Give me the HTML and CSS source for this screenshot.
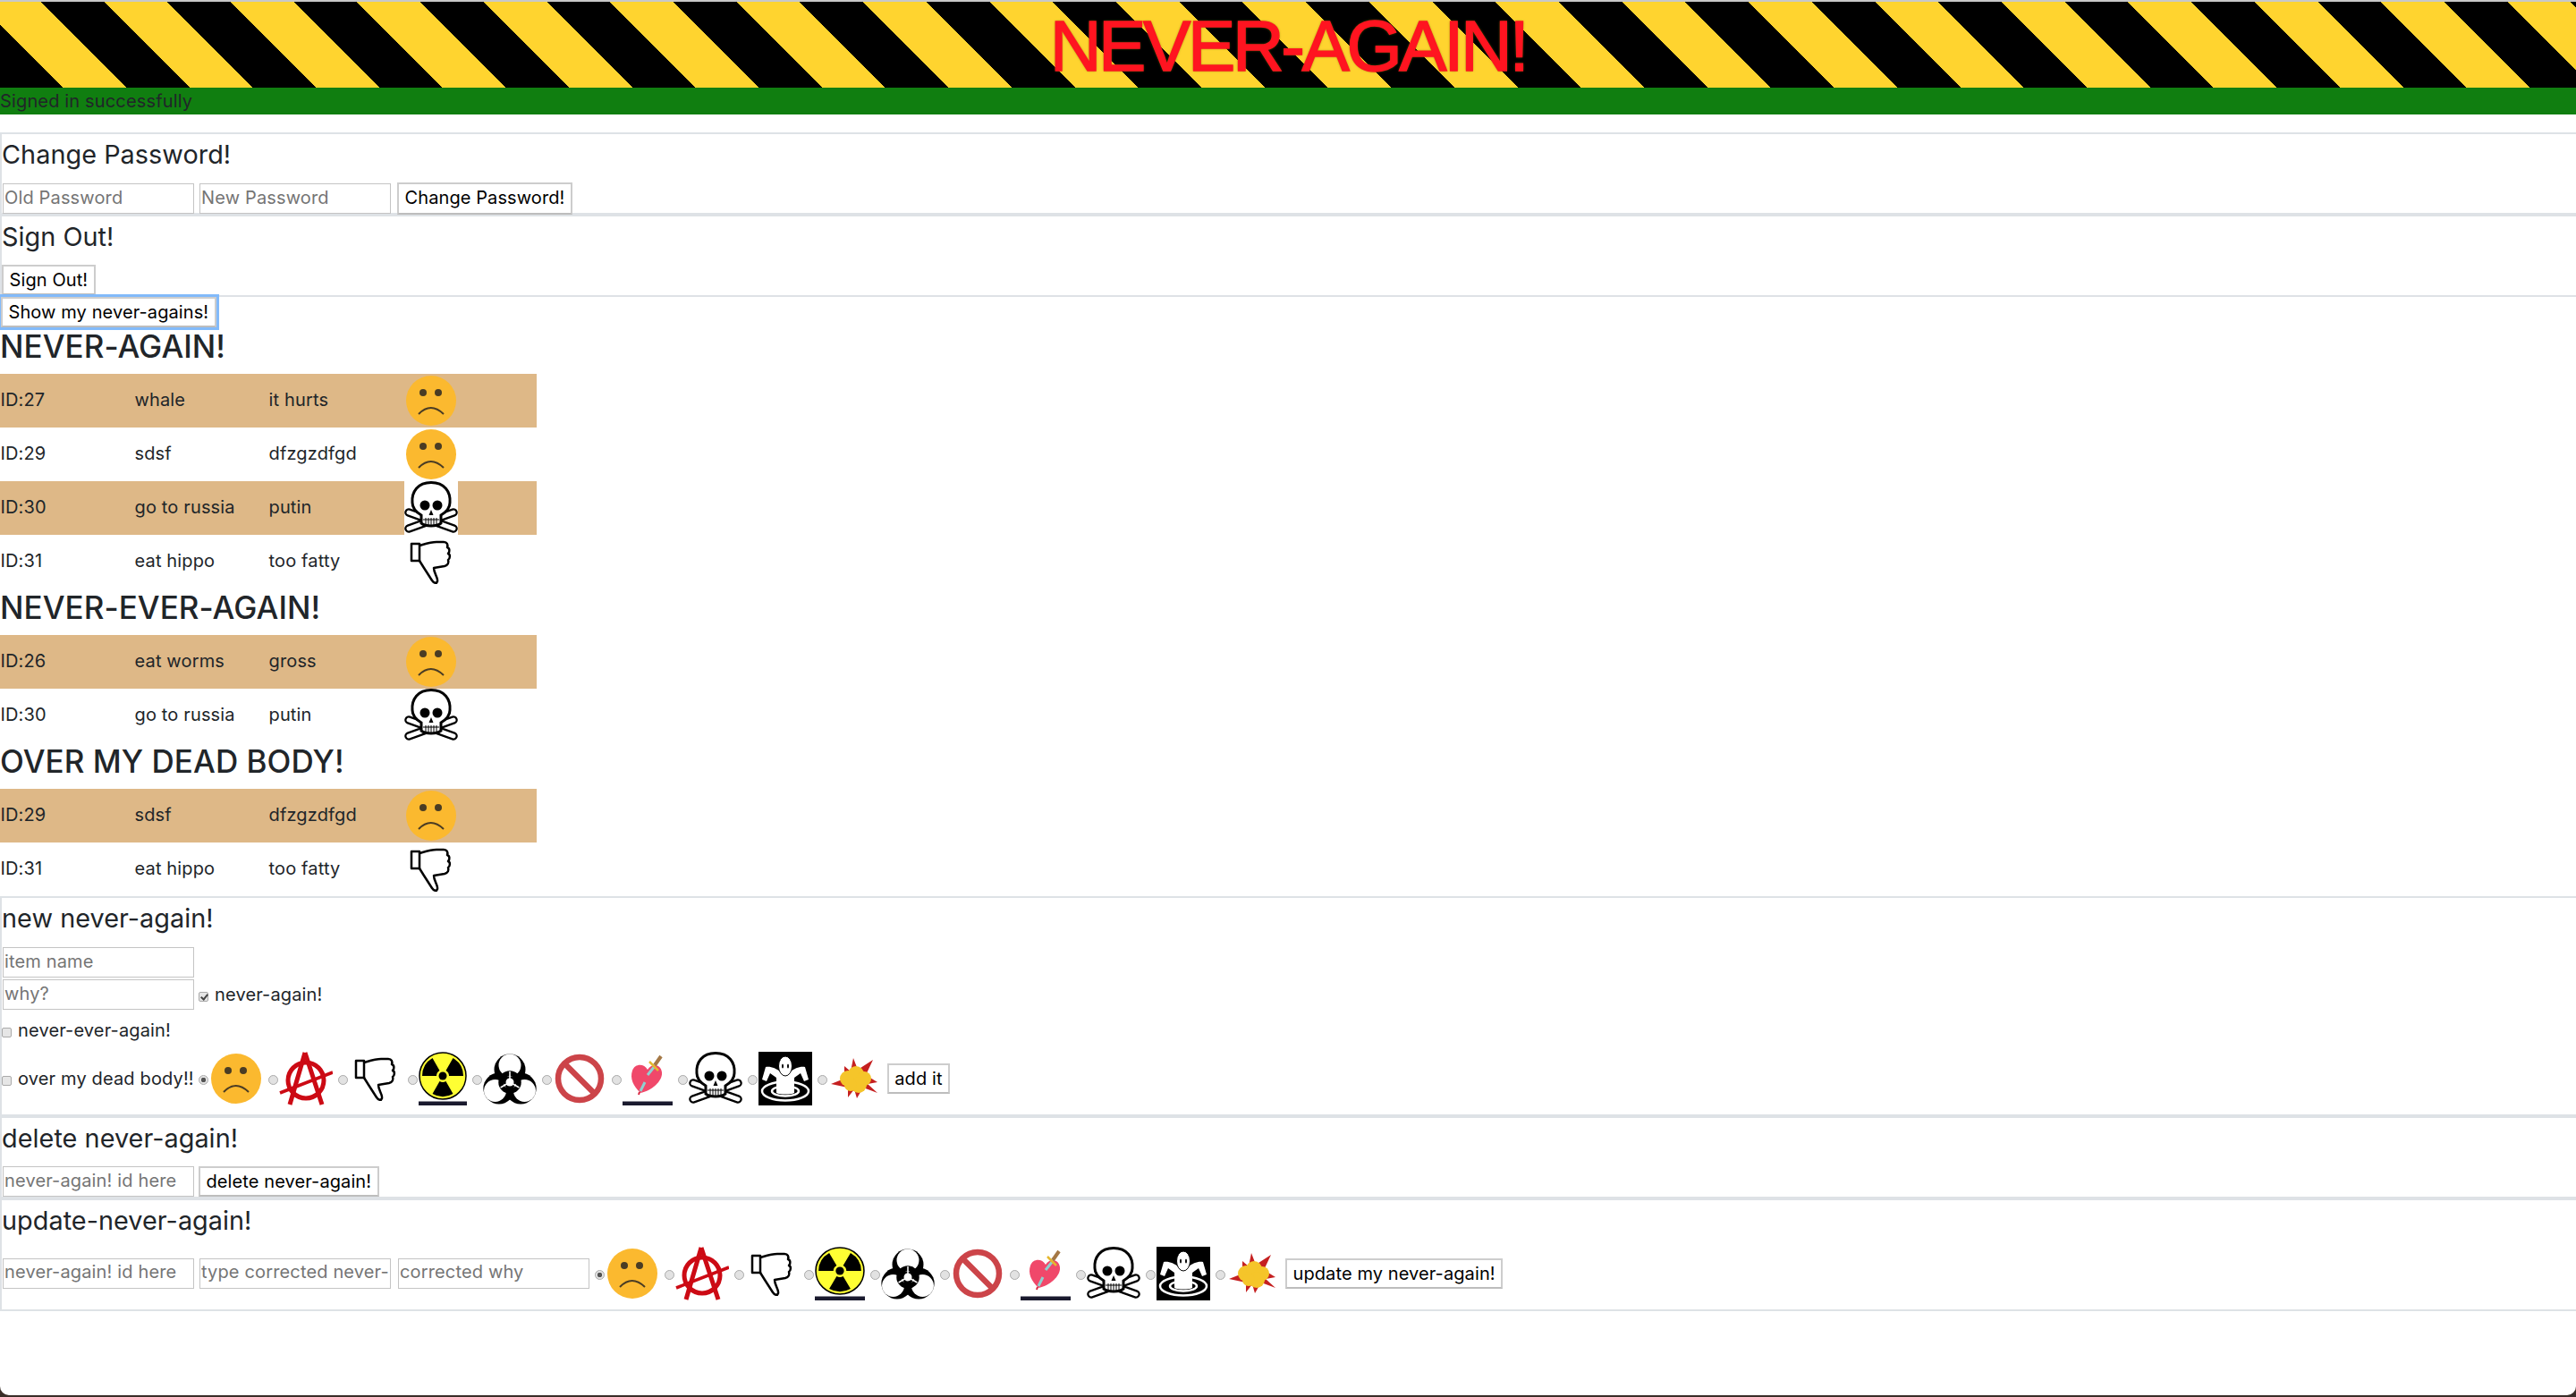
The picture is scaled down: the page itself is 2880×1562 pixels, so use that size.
FILE: index.html
```html
<!DOCTYPE html>
<html lang="en">
<head>
  <meta charset="UTF-8">
  <title>NEVER-AGAIN!</title>
  <link rel="stylesheet" href="styles.css">
</head>
<body>

  <svg class="sprite" xmlns="http://www.w3.org/2000/svg">
    <symbol id="i-sad" viewBox="0 0 60 60">
      <circle cx="30" cy="30" r="28" fill="#fbb92f"/>
      <circle cx="21" cy="21" r="4" fill="#4a3c24"/>
      <circle cx="38" cy="21" r="4" fill="#4a3c24"/>
      <path d="M16 45 Q29.500 31 44 45" fill="none" stroke="#4a3c24" stroke-width="2"/>
    </symbol>
    <symbol id="i-anarchy" viewBox="0 0 60 60">
      <g fill="none" stroke="#cc0a14" stroke-width="5">
        <circle cx="30" cy="32" r="20"/>
        <path d="M29 1 L12 59 M29 1 L48 59"/>
        <path d="M1 46 L60 23" stroke-width="3.500"/>
      </g>
    </symbol>
    <symbol id="i-thumb" viewBox="0 0 60 60">
      <rect width="60" height="60" fill="#fff"/>
      <g fill="none" stroke="#000" stroke-width="2.500" stroke-linejoin="round">
        <rect x="8" y="10" width="9" height="19"/>
        <path d="M17 12 C24 10 30 8 36 8 L44 8 C48 8 49 11 48 14 C51 15 51 19 49 21 C52 22 51 27 49 28 C50 31 49 34 45 35 L33 37 C33 43 38 48 37 52 C36 55 33 54 31 51 L22 37 L17 29"/>
      </g>
    </symbol>
    <symbol id="i-nuke" viewBox="0 0 54 60" preserveAspectRatio="none">
      <circle cx="27" cy="27" r="26" fill="#ffff33" stroke="#000" stroke-width="1.500"/>
      <path d="M34 27 L50 27 A23 23 0 0 0 38.500 7.100 L30.500 20.900 A7 7 0 0 1 34 27Z"/>
      <path d="M20 27 L4 27 A23 23 0 0 1 15.500 7.100 L23.500 20.900 A7 7 0 0 0 20 27Z"/>
      <path d="M23.500 33.100 L15.500 46.900 A23 23 0 0 0 38.500 46.900 L30.500 33.100 A7 7 0 0 1 23.500 33.100Z"/>
      <circle cx="27" cy="27" r="4.500"/>
      <rect y="55.500" width="54" height="4.500" fill="#1a1a2e"/>
    </symbol>
    <symbol id="i-bio" viewBox="0 0 60 60">
      <g transform="translate(30 34)">
        <circle cx="0" cy="-14" r="17.500"/>
        <circle cx="12.120" cy="7" r="17.500"/>
        <circle cx="-12.120" cy="7" r="17.500"/>
        <circle cx="0" cy="-19" r="12.500" fill="#fff"/>
        <circle cx="16.450" cy="9.500" r="12.500" fill="#fff"/>
        <circle cx="-16.450" cy="9.500" r="12.500" fill="#fff"/>
        <circle r="10" fill="none" stroke="#000" stroke-width="5.500"/>
        <path d="M0 -3 L0 -12 M2.600 1.500 L10.400 6 M-2.600 1.500 L-10.400 6" stroke="#fff" stroke-width="1.500"/>
        <circle r="4.500" fill="#fff"/>
      </g>
    </symbol>
    <symbol id="i-no" viewBox="0 0 60 60">
      <circle cx="30" cy="30" r="24" fill="none" stroke="#cc4449" stroke-width="6.500"/>
      <path d="M13 13 L47 47" stroke="#cc4449" stroke-width="6.500"/>
    </symbol>
    <symbol id="i-heart" viewBox="0 0 56 60" preserveAspectRatio="none">
      <path d="M20 46 C12 38 8 30 11 21 C14 13 24 13 28 20 C33 12 43 14 44 23 C45 33 32 44 20 46Z" fill="#f0486a"/>
      <path d="M36 16 L28 26" stroke="#8fd0d0" stroke-width="3"/>
      <path d="M25 34 L20 44" stroke="#8fd0d0" stroke-width="3"/>
      <path d="M19 45 L18 48" stroke="#d8203a" stroke-width="2"/>
      <path d="M30 11 L40 21" stroke="#e5b82e" stroke-width="2.500"/>
      <path d="M36 15 L43 5" stroke="#a47845" stroke-width="4"/>
      <rect y="55.500" width="56" height="4.500" fill="#1a1a2e"/>
    </symbol>
    <symbol id="i-skull" viewBox="0 0 60 60">
      <rect width="60" height="60" fill="#fff"/>
      <g stroke-linecap="round" fill="none">
        <path d="M5 35 L55 53 M55 35 L5 53" stroke="#000" stroke-width="9.500"/>
        <path d="M5 35 L55 53 M55 35 L5 53" stroke="#fff" stroke-width="5"/>
      </g>
      <path d="M30 1.500 C15 1.500 8 12 9 24 C9 31 14 35 19 38 L19 47 C24 51 36 51 41 47 L41 38 C46 35 51 31 51 24 C52 12 45 1.500 30 1.500Z" fill="#fff" stroke="#000" stroke-width="3"/>
      <circle cx="23" cy="27" r="5.500"/>
      <circle cx="37" cy="27" r="5.500"/>
      <path d="M30 32 L27.500 38 L32.500 38Z"/>
      <path d="M21 43 L39 43 M24 41 L24 48 M27 41 L27 49 M30 41 L30 49 M33 41 L33 49 M36 41 L36 48" stroke="#000" stroke-width="1"/>
    </symbol>
    <symbol id="i-hole" viewBox="0 0 60 60">
      <rect width="60" height="60"/>
      <g fill="none" stroke="#fff">
        <ellipse cx="30" cy="44" rx="26" ry="10.500" stroke-width="2.500"/>
        <ellipse cx="30" cy="44" rx="15" ry="5.500" stroke-width="2.500"/>
      </g>
      <path d="M4 31 L8 17 C14 16 20 19 24 22 L36 22 C40 19 46 16 52 17 L56 31 L51 33 L47 24 L40 29 L40 46 C36 48 24 48 20 46 L20 29 L13 24 L9 33Z" fill="#fff"/>
      <ellipse cx="30" cy="16" rx="7.500" ry="11" fill="#fff" stroke="#000"/>
      <ellipse cx="27" cy="16" rx="1" ry="2.500"/>
      <ellipse cx="33" cy="16" rx="1" ry="2.500"/>
    </symbol>
    <symbol id="i-boom" viewBox="0 0 60 60">
      <path d="M18 16 L25 22 L28 7 L33 20 L50 9 L42 26 L55 34 L44 36 L55 46 L39 40 L32 52 L29 42 L22 51 L22 40 L3 36 L18 30Z" fill="#c52020"/>
      <g fill="#f5c52a">
        <circle cx="22" cy="30" r="9"/>
        <circle cx="31" cy="25" r="9"/>
        <circle cx="40" cy="30" r="8"/>
        <circle cx="34" cy="37" r="9"/>
        <circle cx="25" cy="37" r="7"/>
      </g>
    </symbol>
  </svg>

  <header class="banner">
    <h1>NEVER-AGAIN!</h1>
  </header>
  <div class="flash">Signed in successfully</div>

  <section class="panel panel-first">
    <h4>Change Password!</h4>
    <div class="line line-flush">
      <input type="password" placeholder="Old Password">
      <input type="password" placeholder="New Password">
      <button class="btn btn-tall btn-change">Change Password!</button>
    </div>
  </section>

  <section class="panel">
    <h4>Sign Out!</h4>
    <button class="btn">Sign Out!</button>
  </section>

  <button class="btn btn-show">Show my never-agains!</button>

  <h3>NEVER-AGAIN!</h3>
  <div class="list">
    <div class="item"><span>ID:27</span><span>whale</span><span>it hurts</span><svg width="60" height="60"><use href="#i-sad"/></svg></div>
    <div class="item"><span>ID:29</span><span>sdsf</span><span>dfzgzdfgd</span><svg width="60" height="60"><use href="#i-sad"/></svg></div>
    <div class="item"><span>ID:30</span><span>go to russia</span><span>putin</span><svg width="60" height="60"><use href="#i-skull"/></svg></div>
    <div class="item"><span>ID:31</span><span>eat hippo</span><span>too fatty</span><svg width="60" height="60"><use href="#i-thumb"/></svg></div>
  </div>

  <h3>NEVER-EVER-AGAIN!</h3>
  <div class="list">
    <div class="item"><span>ID:26</span><span>eat worms</span><span>gross</span><svg width="60" height="60"><use href="#i-sad"/></svg></div>
    <div class="item"><span>ID:30</span><span>go to russia</span><span>putin</span><svg width="60" height="60"><use href="#i-skull"/></svg></div>
  </div>

  <h3>OVER MY DEAD BODY!</h3>
  <div class="list">
    <div class="item"><span>ID:29</span><span>sdsf</span><span>dfzgzdfgd</span><svg width="60" height="60"><use href="#i-sad"/></svg></div>
    <div class="item"><span>ID:31</span><span>eat hippo</span><span>too fatty</span><svg width="60" height="60"><use href="#i-thumb"/></svg></div>
  </div>

  <section class="panel panel-add">
    <h4>new never-again!</h4>
    <div class="line"><input type="text" placeholder="item name"></div>
    <div class="line">
      <input type="text" placeholder="why?">
      <label class="check"><input type="checkbox" checked>never-again!</label>
    </div>
    <div class="line line-check">
      <label class="check"><input type="checkbox">never-ever-again!</label>
    </div>
    <div class="line line-icons">
      <label class="check"><input type="checkbox">over my dead body!!</label>
      <label class="pick"><input type="radio" name="icon" checked><svg width="60" height="60"><use href="#i-sad"/></svg></label>
      <label class="pick"><input type="radio" name="icon"><svg width="60" height="60"><use href="#i-anarchy"/></svg></label>
      <label class="pick"><input type="radio" name="icon"><svg width="60" height="60"><use href="#i-thumb"/></svg></label>
      <label class="pick"><input type="radio" name="icon"><svg width="54" height="60"><use href="#i-nuke"/></svg></label>
      <label class="pick"><input type="radio" name="icon"><svg width="60" height="60"><use href="#i-bio"/></svg></label>
      <label class="pick"><input type="radio" name="icon"><svg width="60" height="60"><use href="#i-no"/></svg></label>
      <label class="pick"><input type="radio" name="icon"><svg width="56" height="60"><use href="#i-heart"/></svg></label>
      <label class="pick"><input type="radio" name="icon"><svg width="60" height="60"><use href="#i-skull"/></svg></label>
      <label class="pick"><input type="radio" name="icon"><svg width="60" height="60"><use href="#i-hole"/></svg></label>
      <label class="pick"><input type="radio" name="icon"><svg width="60" height="60"><use href="#i-boom"/></svg></label>
      <button class="btn">add it</button>
    </div>
  </section>

  <section class="panel">
    <h4>delete never-again!</h4>
    <div class="line line-short">
      <input type="text" placeholder="never-again! id here">
      <button class="btn btn-delete">delete never-again!</button>
    </div>
  </section>

  <section class="panel panel-update">
    <h4>update-never-again!</h4>
    <div class="line line-icons">
      <input type="text" placeholder="never-again! id here">
      <input type="text" placeholder="type corrected never-again!">
      <input class="input-why" type="text" placeholder="corrected why">
      <label class="pick"><input type="radio" name="icon2" checked><svg width="60" height="60"><use href="#i-sad"/></svg></label>
      <label class="pick"><input type="radio" name="icon2"><svg width="60" height="60"><use href="#i-anarchy"/></svg></label>
      <label class="pick"><input type="radio" name="icon2"><svg width="60" height="60"><use href="#i-thumb"/></svg></label>
      <label class="pick"><input type="radio" name="icon2"><svg width="56" height="60"><use href="#i-nuke"/></svg></label>
      <label class="pick"><input type="radio" name="icon2"><svg width="60" height="60"><use href="#i-bio"/></svg></label>
      <label class="pick"><input type="radio" name="icon2"><svg width="60" height="60"><use href="#i-no"/></svg></label>
      <label class="pick"><input type="radio" name="icon2"><svg width="56" height="60"><use href="#i-heart"/></svg></label>
      <label class="pick"><input type="radio" name="icon2"><svg width="60" height="60"><use href="#i-skull"/></svg></label>
      <label class="pick"><input type="radio" name="icon2"><svg width="60" height="60"><use href="#i-hole"/></svg></label>
      <label class="pick"><input type="radio" name="icon2"><svg width="60" height="60"><use href="#i-boom"/></svg></label>
      <button class="btn">update my never-again!</button>
    </div>
  </section>

</body>
</html>
```

FILE: styles.css
```css
html {
  background: #3a2e28;
}

body {
  margin: 0;
  height: 1560px;
  box-sizing: border-box;
  background: #fff;
  border-top: 2px solid #c8c8c8;
  border-radius: 0 0 10px 10px;
  color: #212529;
  font-family: Inter, "Noto Sans", sans-serif;
  font-size: 20px;
  line-height: 30px;
  letter-spacing: 0.150px;
  overflow: hidden;
}

.sprite {
  display: none;
}

.banner {
  height: 96px;
  display: flex;
  justify-content: center;
  background: repeating-linear-gradient(45deg, #000 0 50px, #ffd42f 50px 100px);
}

.banner h1 {
  margin: 3px 0 0;
  font-family: "Liberation Sans", Arial, sans-serif;
  font-size: 80px;
  font-weight: 400;
  line-height: 93px;
  letter-spacing: -3.400px;
  color: #ff1420;
  -webkit-text-stroke: 1.500px #ff1420;
  text-shadow: 0 0 3px #7a7a00;
}

.flash {
  height: 30px;
  background: #107e10;
  margin-bottom: 20px;
}

.panel {
  border: 2px solid #dee2e6;
  border-right: 0;
}

h4 {
  margin: 0 0 9px;
  font-size: 28.800px;
  font-weight: 400;
  line-height: 45px;
  letter-spacing: 0.050px;
}

h3 {
  margin: 0 0 10px;
  font-size: 35px;
  font-weight: 500;
  line-height: 42px;
  letter-spacing: 0.050px;
}

.line {
  display: flex;
  align-items: center;
  height: 36px;
}

.line-flush {
  margin-bottom: -2px;
}

.line-short {
  height: 34px;
}

.line-check {
  height: 44px;
  padding-bottom: 2px;
}

.line-icons {
  height: 60px;
  padding-bottom: 10px;
}

.panel-update .line-icons {
  margin-top: -3px;
  height: 61px;
}

input[type="text"],
input[type="password"] {
  box-sizing: border-box;
  flex: none;
  width: 214px;
  height: 34px;
  margin: 0 6px 0 1px;
  padding: 0 1px 3px;
  border: 1.500px solid #c4c4c4;
  background: #fff;
  font: inherit;
  letter-spacing: inherit;
  color: #212529;
}

input + input[type="text"],
input + input[type="password"] {
  margin-left: 0;
}

input::placeholder {
  color: #757575;
  opacity: 1;
}

.input-why {
  margin-left: 2px !important;
}

.btn {
  box-sizing: border-box;
  display: block;
  flex: none;
  height: 34px;
  padding: 0 6.500px 3px;
  border: 2px solid #cdcdcd;
  border-bottom-color: #bdbdbd;
  background: #fff;
  color: #000;
  font: inherit;
  letter-spacing: 0.100px;
}

.btn-tall {
  height: 36px;
}

.btn-change {
  margin-left: 1px;
}

.btn-delete {
  margin-left: -1px;
}

.btn-show {
  margin-left: 1px;
  box-shadow: 0 0 0 3px #82bafa;
  position: relative;
}

.item {
  display: grid;
  grid-template-columns: 150px 150px 150px 150px;
  width: 600px;
  height: 60px;
  align-items: center;
}

.item span {
  margin-top: -3px;
  padding-left: 0.500px;
}

.item svg {
  display: block;
  margin-left: 2px;
}

.item:nth-child(odd) {
  background: #deb887;
}

.check {
  display: flex;
  align-items: center;
  flex: none;
}

input[type="checkbox"] {
  appearance: none;
  box-sizing: border-box;
  width: 11px;
  height: 11px;
  margin: 4px 7px 0 0;
  border: 1px solid #aaa;
  border-radius: 2px;
  background: #e6e6e6;
  position: relative;
}

input[type="checkbox"]:checked::after {
  content: "";
  position: absolute;
  left: 2.500px;
  top: 0;
  width: 3px;
  height: 6px;
  border: solid #444;
  border-width: 0 2px 2px 0;
  transform: rotate(40deg);
}

.line .check:not(:first-child) {
  margin-left: -1px;
}

.line-icons .check {
  padding-right: 5px;
}

.pick {
  display: flex;
  align-items: center;
  flex: none;
  margin-right: 6px;
}

.pick svg {
  display: block;
}

input[type="radio"] {
  appearance: none;
  box-sizing: border-box;
  width: 11px;
  height: 11px;
  margin: 3px 1px 0 0;
  border: 1px solid #aaa;
  border-radius: 50%;
  background: #e2e2e2;
}

input[type="radio"]:checked {
  background: radial-gradient(circle, #555 0 2.500px, #e2e2e2 3px);
}
```
